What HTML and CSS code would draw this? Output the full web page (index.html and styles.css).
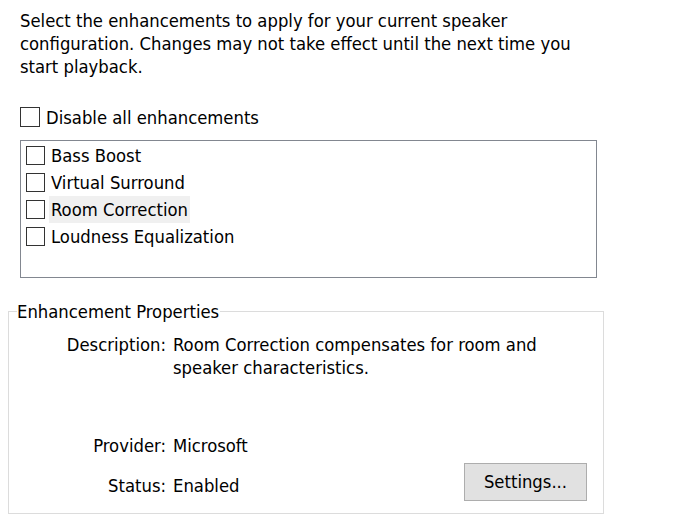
FILE: index.html
```html
<!DOCTYPE html>
<html>
<head>
<meta charset="utf-8">
<link rel="stylesheet" href="styles.css">
</head>
<body>
<div class="page">
  <p class="intro">Select the enhancements to apply for your current speaker configuration. Changes may not take effect until the next time you start playback.</p>

  <label class="disable">
    <span class="box"></span>
    <span class="disable-text">Disable all enhancements</span>
  </label>

  <div class="listbox">
    <div class="item"><span class="box small"></span><span class="item-text">Bass Boost</span></div>
    <div class="item"><span class="box small"></span><span class="item-text">Virtual Surround</span></div>
    <div class="item"><span class="box small"></span><span class="item-text selected">Room Correction</span></div>
    <div class="item"><span class="box small"></span><span class="item-text">Loudness Equalization</span></div>
  </div>

  <fieldset class="props">
    <legend class="props-title">Enhancement Properties</legend>
    <div class="props-grid">
      <div class="lbl row-desc">Description:</div>
      <div class="val row-desc desc-val">Room Correction compensates for room and speaker characteristics.</div>
      <div class="lbl row-prov">Provider:</div>
      <div class="val row-prov">Microsoft</div>
      <div class="lbl row-status">Status:</div>
      <div class="val row-status">Enabled</div>
      <button class="settings">Settings...</button>
    </div>
  </fieldset>
</div>
</body>
</html>
```

FILE: styles.css
```css
html, body {
  margin: 0;
  padding: 0;
  background: #ffffff;
}

.page {
  width: 674px;
  height: 526px;
  overflow: hidden;
  font-family: "DejaVu Sans", "Liberation Sans", sans-serif;
  font-stretch: condensed;
  font-size: 18.3px;
  line-height: 23px;
  color: #000000;
}

.intro {
  margin: 9px 0 0 20px;
  width: 580px;
}

.disable {
  display: flex;
  align-items: center;
  gap: 6px;
  margin: 29px 0 0 20px;
  height: 20px;
}

.box {
  display: block;
  width: 18px;
  height: 18px;
  border: 1px solid #333333;
  background: #ffffff;
  flex: none;
}

.box.small {
  width: 17px;
  height: 17px;
}

.listbox {
  margin: 13px 0 0 20px;
  width: 575px;
  height: 135px;
  border: 1px solid #828790;
  padding-top: 1px;
}

.item {
  display: flex;
  align-items: center;
  height: 27px;
  padding-left: 5px;
}

.item-text {
  margin-left: 4px;
  padding: 0 2px;
  height: 27px;
  line-height: 27px;
}

.item-text.selected {
  background: #f0f0f0;
}

.props {
  margin: 22px 0 0 8px;
  width: 596px;
  box-sizing: border-box;
  border: 1px solid #dcdcdc;
  padding: 10px 16px 12px 0;
  min-width: 0;
}

.props-title {
  padding: 0 1px 0 0;
  margin-left: 8px;
}

.props-grid {
  display: grid;
  grid-template-columns: 157px 1fr auto;
  grid-template-rows: 101px 40px auto;
  column-gap: 7px;
}

.lbl {
  grid-column: 1;
  text-align: right;
}

.val {
  grid-column: 2;
}

.desc-val {
  grid-column: 2 / 4;
  max-width: 385px;
}

.row-desc { grid-row: 1; }
.row-prov { grid-row: 2; }
.row-status { grid-row: 3; }

.settings {
  grid-column: 3;
  grid-row: 3;
  align-self: start;
  margin-top: -11.5px;
  width: 123px;
  height: 38px;
  background: #e1e1e1;
  border: 1px solid #adadad;
  font-family: inherit;
  font-stretch: condensed;
  font-size: 18.3px;
  color: #000000;
  padding: 0;
}
```
